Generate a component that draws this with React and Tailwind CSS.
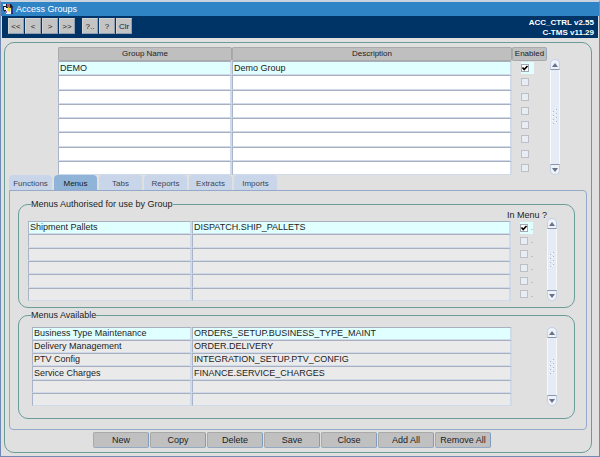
import React from "react";

const groups = [
  { name: "DEMO", description: "Demo Group", enabled: true },
  {}, {}, {}, {}, {}, {}, {},
];

const authorised = [
  { name: "Shipment Pallets", description: "DISPATCH.SHIP_PALLETS", enabled: true },
  {}, {}, {}, {}, {},
];

const available = [
  { name: "Business Type Maintenance", description: "ORDERS_SETUP.BUSINESS_TYPE_MAINT" },
  { name: "Delivery Management", description: "ORDER.DELIVERY" },
  { name: "PTV Config", description: "INTEGRATION_SETUP.PTV_CONFIG" },
  { name: "Service Charges", description: "FINANCE.SERVICE_CHARGES" },
  {}, {},
];

const tabs = ["Functions", "Menus", "Tabs", "Reports", "Extracts", "Imports"];
const actions = ["New", "Copy", "Delete", "Save", "Close", "Add All", "Remove All"];

const AppIcon = () => (
  <svg viewBox="0 0 12 12" className="h-3 w-3" aria-hidden="true">
    <path d="M1 1h8l2 3v7H5L1 7z" fill="#181828" />
    <rect x="1" y="1" width="3" height="2" fill="#e8e8f0" />
    <rect x="2" y="4" width="2" height="3" fill="#e8e8f0" />
    <rect x="5" y="1" width="3" height="3" fill="#b8506a" />
    <rect x="4" y="5" width="5" height="6" fill="#f4f4f4" />
    <path d="M6 4l3 1-1 4-3-1z" fill="#e8dc30" />
    <path d="M9 4l2 1v5l-2 1z" fill="#2636a8" />
    <rect x="3" y="8" width="2" height="2" fill="#a868c0" />
  </svg>
);

const CheckBox = ({ label, checked }) => (
  <span className="relative block h-2 w-2">
    <input
      type="checkbox"
      aria-label={label}
      defaultChecked={checked}
      disabled={!checked}
      className="peer block h-2 w-2 appearance-none border border-[#bcc0c6] bg-[#e8edf4] checked:border-[#a0a8b4] checked:bg-white"
    />
    <svg
      viewBox="0 0 8 8"
      className="pointer-events-none absolute inset-0 hidden h-2 w-2 peer-checked:block"
      fill="none"
      stroke="#000"
      strokeWidth="1.7"
    >
      <path d="M1.5 3.5L3.2 5.5L6.5 2" />
    </svg>
  </span>
);

const ScrollBar = () => (
  <div className="flex w-[10px] shrink-0 flex-col items-stretch">
    <button aria-label="Scroll up" className="flex h-[11px] items-center justify-center rounded-t-full border border-[#c3d1e6] border-b-[#8c97ad] bg-[#eef3fa]">
      <svg viewBox="0 0 6 4" className="h-1 w-[6px]"><path d="M0 4L3 0L6 4Z" fill="#6b7088" /></svg>
    </button>
    <div className="flex flex-1 items-center justify-center border-x border-[#f6f8fb] bg-[#e6ecf5]">
      <svg viewBox="0 0 6 16" className="h-4 w-[6px]" fill="#a9b8ce">
        {[1, 5, 9, 13].map((y) => (
          <g key={y}>
            <rect x="4" y={y - 1} width="1" height="1" />
            <rect x="3" y={y} width="1" height="1" fill="#fff" />
            <rect x="1" y={y + 1} width="1" height="1" />
            <rect x="0" y={y + 2} width="1" height="1" fill="#fff" />
          </g>
        ))}
      </svg>
    </div>
    <button aria-label="Scroll down" className="flex h-[11px] items-center justify-center rounded-b-full border border-[#c3d1e6] border-t-[#8c97ad] bg-[#eef3fa]">
      <svg viewBox="0 0 6 4" className="h-1 w-[6px]"><path d="M0 0L3 4L6 0Z" fill="#6b7088" /></svg>
    </button>
  </div>
);

const Field = ({ value, label, tone }) => (
  <td className={`border border-r-2 border-t-[#a9afbf] border-r-[#cfdaea] border-b-[#cfdaea] border-l-[#a9b4c8] p-0 ${tone}`}>
    <input
      aria-label={label}
      defaultValue={value}
      className="block h-[11px] w-full bg-transparent pl-px text-[9px] leading-[11px] outline-none"
    />
  </td>
);

const Rows = ({ rows, empty, check, dot }) => (
  <tbody>
    {rows.map((row, i) => {
      const tone = i === 0 ? "bg-[#e0ffff]" : empty;
      return (
        <tr key={i}>
          <Field value={row.name} label={`Name ${i + 1}`} tone={tone} />
          <Field value={row.description} label={`Description ${i + 1}`} tone={tone} />
          {check && (
            <td className="p-0 pl-[9px]">
              <div className={`flex h-3 w-[13px] items-center justify-between ${i === 0 ? "bg-[#e0ffff]" : ""}`}>
                <CheckBox label={`${check} ${i + 1}`} checked={!!row.enabled} />
                {dot && <span className="text-[8px] leading-[11px] text-[#8a7a6a]">.</span>}
              </div>
            </td>
          )}
        </tr>
      );
    })}
  </tbody>
);

const ToolButton = ({ children }) => (
  <button className="h-4 w-4 border border-[#d4d4d4] border-r-[#8fa0b4] border-b-[#8fa0b4] bg-[#c4c4c4] text-center text-[8px] leading-[13px]">
    {children}
  </button>
);

const headCell = "h-[14px] rounded-xs border border-[#a9a9a9] border-r-[#93a9c4] bg-[#bfbfbf] p-0 text-[8px] leading-[12px] font-normal";

const App = () => {
  return (
    <div className="flex flex-col border border-t-2 border-b-2 border-[#7088b4] border-t-[#c9d3e0] bg-[#e0e0e0] font-['Liberation_Sans',Arial,sans-serif] text-[9px] leading-[11px] text-[#1c1c24]">
      <header>
        <div className="flex h-[14px] items-center gap-[2px] bg-[#2f84c6] pl-px text-white">
          <AppIcon />
          <h1>Access Groups</h1>
        </div>
        <div className="mx-px flex h-[22px] items-start justify-between bg-[#003366] pt-[2px] pr-1 pl-[6px]">
          <div className="flex gap-[7px]">
            <div className="flex gap-px">
              <ToolButton>&lt;&lt;</ToolButton>
              <ToolButton>&lt;</ToolButton>
              <ToolButton>&gt;</ToolButton>
              <ToolButton>&gt;&gt;</ToolButton>
            </div>
            <div className="flex gap-px">
              <ToolButton>?..</ToolButton>
              <ToolButton>?</ToolButton>
              <ToolButton>Clr</ToolButton>
            </div>
          </div>
          <div className="text-right text-[8px] leading-[10px] font-bold text-white">
            <p>ACC_CTRL v2.55</p>
            <p>C-TMS v11.29</p>
          </div>
        </div>
      </header>

      <main className="mt-1 mr-[7px] mb-[3px] ml-[3px] rounded-[10px] border border-[#6a9c98] pr-1 pb-1 pl-1">
        <div className="flex pt-1 pr-[27px] pl-[49px]">
          <table className="h-[128px] w-full min-w-0 table-fixed border-separate border-spacing-0">
            <colgroup>
              <col className="w-[174px]" />
              <col />
              <col className="w-[35px]" />
            </colgroup>
            <thead>
              <tr className="h-[14px]">
                <th className={headCell}>Group Name</th>
                <th className={headCell}>Description</th>
                <th className={headCell}>Enabled</th>
              </tr>
            </thead>
            <Rows rows={groups} empty="bg-white" check="Enabled" />
          </table>
          <div className="flex pt-3 pl-[3px]">
            <ScrollBar />
          </div>
        </div>

        <div role="tablist" className="flex gap-[2px]">
          {tabs.map((tab) => (
            <button
              key={tab}
              role="tab"
              aria-selected={tab === "Menus"}
              className={`h-[15px] w-[43px] rounded-t text-center text-[8px] leading-[17px] ${
                tab === "Menus" ? "bg-[#8fb4d8] text-[#101828]" : "bg-[#c9d6e9] text-[#3c4658]"
              }`}
            >
              {tab}
            </button>
          ))}
        </div>

        <section className="rounded-tr rounded-b border border-[#93abc9] pt-2 pr-[11px] pb-[10px] pl-2">
          <fieldset className="rounded-[10px] border border-[#6a9c98] pr-[17px] pb-[6px] pl-[9px]">
            <legend className="ml-[3px]">Menus Authorised for use by Group</legend>
            <div className="flex">
              <table className="h-[91px] w-full min-w-0 table-fixed border-separate border-spacing-0">
                <colgroup>
                  <col className="w-[164px]" />
                  <col />
                  <col className="w-[36px]" />
                </colgroup>
                <thead>
                  <tr className="h-[11px]">
                    <th className="p-0" colSpan={2} />
                    <th className="p-0 font-normal">
                      <div className="flex justify-end whitespace-nowrap">In Menu ?</div>
                    </th>
                  </tr>
                </thead>
                <Rows rows={authorised} empty="bg-[#eaeaea]" check="In Menu" dot />
              </table>
              <div className="flex pt-2">
                <ScrollBar />
              </div>
            </div>
          </fieldset>

          <fieldset className="mt-[2px] rounded-[10px] border border-[#6a9c98] pr-[17px] pb-3 pl-[13px]">
            <legend className="-ml-px">Menus Available</legend>
            <div className="flex pt-[6px]">
              <table className="h-[79px] w-full min-w-0 table-fixed border-separate border-spacing-0">
                <colgroup>
                  <col className="w-[160px]" />
                  <col />
                </colgroup>
                <Rows rows={available} empty="bg-[#eaeaea]" />
              </table>
              <div className="flex pl-[35px]">
                <ScrollBar />
              </div>
            </div>
          </fieldset>
        </section>

        <div className="flex justify-center gap-px pt-[2px] pr-3">
          {actions.map((action) => (
            <button
              key={action}
              className="h-4 w-14 rounded-xs border border-[#a9a9a9] border-r-[#7f9cbc] border-b-[#93a9c4] bg-[#c0c0c0] text-center leading-[14px] whitespace-nowrap"
            >
              {action}
            </button>
          ))}
        </div>
      </main>
    </div>
  );
};

export default App;
